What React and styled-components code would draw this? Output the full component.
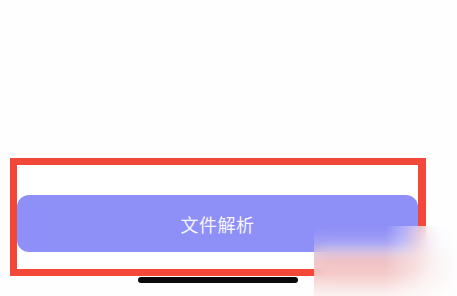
import React from "react";
import styled, { createGlobalStyle } from "styled-components";

const Global = createGlobalStyle`
  html, body { margin: 0; padding: 0; background: #ffffff; }
  body { font-family: "Noto Sans CJK SC", "Noto Sans", sans-serif; }
`;

const Page = styled.div`
  position: relative;
  width: 457px;
  height: 296px;
  overflow: hidden;
  background: #fefefe;
  padding: 158px 0 0 10px;
  box-sizing: border-box;
`;

const Column = styled.div`
  width: 416px;
  display: flex;
  flex-direction: column;
  align-items: center;
`;

const Highlight = styled.div`
  width: 416px;
  height: 118px;
  box-sizing: border-box;
  border: 7px solid #f3473a;
  border-right-width: 8px;
  padding: 30px 0 16px 0;
  display: flex;
  background: #ffffff;
`;

const ActionButton = styled.button`
  flex: 1;
  height: 57px;
  border: none;
  border-radius: 12px;
  background: #8f8ff8;
  color: #f6f6ff;
  font-family: "Noto Sans CJK SC", "Noto Sans", sans-serif;
  font-size: 18px;
  letter-spacing: 0.5px;
  padding: 0;
  display: flex;
  align-items: center;
  justify-content: center;
`;

const HomeIndicator = styled.div`
  width: 160px;
  height: 6px;
  margin-top: 1px;
  border-radius: 3px;
  background: #0a0a0a;
`;

const Watermark = styled.div`
  position: absolute;
  left: 314px;
  top: 226px;
  width: 143px;
  height: 70px;
  backdrop-filter: blur(9px);
  background:
    linear-gradient(to right, rgba(255,255,255,0) 0%, rgba(255,255,255,0) 50%, rgba(255,255,255,0.7) 80%, rgba(255,255,255,0.95) 100%),
    linear-gradient(to bottom, rgba(143,143,248,0.1) 0%, rgba(190,180,235,0.35) 25%, rgba(238,190,192,0.8) 50%, rgba(243,205,205,0.85) 70%, rgba(252,240,240,0.9) 100%);
`;

export default function App() {
  return (
    <>
      <Global />
      <Page>
        <Column>
          <Highlight>
            <ActionButton>文件解析</ActionButton>
          </Highlight>
          <HomeIndicator />
        </Column>
        <Watermark />
      </Page>
    </>
  );
}
